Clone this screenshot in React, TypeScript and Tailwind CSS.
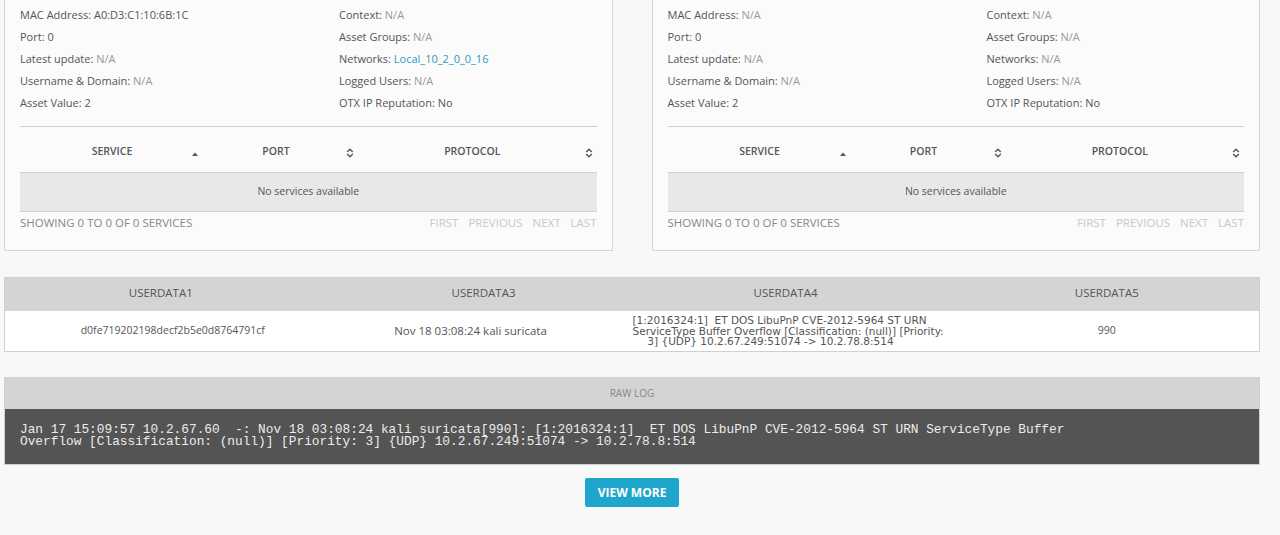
import React from "react";

const SortBoth = () => (
  <svg width="8" height="10" viewBox="0 0 8 10" className="inline-block">
    <path d="M1.2 4 L4 1.3 L6.8 4" fill="none" stroke="#555" strokeWidth="1.4" />
    <path d="M1.2 6 L4 8.7 L6.8 6" fill="none" stroke="#555" strokeWidth="1.4" />
  </svg>
);

const SortUp = () => (
  <svg width="8" height="6" viewBox="0 0 8 6" className="inline-block">
    <path d="M1 5 L4 1.5 L7 5 Z" fill="#555" />
  </svg>
);

const Field = ({
  label,
  value,
  tone = "muted",
}: {
  label: string;
  value: string;
  tone?: "muted" | "dark" | "link";
}) => (
  <div className="h-[22px] leading-[22px] text-[#555]">
    {label}:{" "}
    <span
      className={
        tone === "link"
          ? "text-[#2a9bc0]"
          : tone === "dark"
          ? "text-[#555]"
          : "text-[#999]"
      }
    >
      {value}
    </span>
  </div>
);

const AssetPanel = ({ mac, networks }: { mac: string; networks: string }) => (
  <div className="bg-[#fbfbfb] border-x border-b border-[#d6d6d6] px-[15px] pt-[4px] pb-[16px]">
    <div className="grid grid-cols-[319px_1fr] text-[11px]">
      <div>
        <Field label="MAC Address" value={mac} tone={mac === "N/A" ? "muted" : "dark"} />
        <Field label="Port" value="0" tone="dark" />
        <Field label="Latest update" value="N/A" />
        <Field label="Username & Domain" value="N/A" />
        <Field label="Asset Value" value="2" tone="dark" />
      </div>
      <div>
        <Field label="Context" value="N/A" />
        <Field label="Asset Groups" value="N/A" />
        <Field
          label="Networks"
          value={networks}
          tone={networks === "N/A" ? "muted" : "link"}
        />
        <Field label="Logged Users" value="N/A" />
        <Field label="OTX IP Reputation" value="No" tone="dark" />
      </div>
    </div>
    <div className="mt-[12px] border-t border-[#cfcfcf]" />
    <div className="flex h-[45px] pt-[5px] items-center text-[10.5px] font-semibold text-[#555] uppercase">
      <div className="relative w-[184px] text-center">
        SERVICE
        <span className="absolute right-[5px] top-[2px]">
          <SortUp />
        </span>
      </div>
      <div className="relative w-[160px] pr-[16px] text-center">
        PORT
        <span className="absolute right-[10px] top-[1px]">
          <SortBoth />
        </span>
      </div>
      <div className="relative flex-1 pr-[16px] text-center">
        PROTOCOL
        <span className="absolute right-[4px] top-[1px]">
          <SortBoth />
        </span>
      </div>
    </div>
    <div className="h-[40px] flex items-center justify-center bg-[#e8e8e8] border-y border-[#d0d0d0] text-[10.5px] text-[#555]">
      No services available
    </div>
    <div className="flex justify-between h-[22px] items-center text-[11.5px] uppercase">
      <span className="text-[#888]">Showing 0 to 0 of 0 services</span>
      <span className="flex gap-[10px] text-[#c8c8c8]">
        <span>First</span>
        <span>Previous</span>
        <span>Next</span>
        <span>Last</span>
      </span>
    </div>
  </div>
);

export default function App() {
  return (
    <div
      className="min-h-[535px] bg-[#f8f8f8] pl-[4px] pr-[20px]"
      style={{ fontFamily: '"Open Sans", "Liberation Sans", sans-serif' }}
    >
      <div className="grid grid-cols-2 gap-[39px]">
        <AssetPanel mac="A0:D3:C1:10:6B:1C" networks="Local_10_2_0_0_16" />
        <AssetPanel mac="N/A" networks="N/A" />
      </div>

      <table className="mt-[26px] w-full table-fixed border border-[#d0d0d0] text-[#555]">
        <colgroup>
          <col className="w-[320px]" />
          <col className="w-[308px]" />
          <col className="w-[310px]" />
          <col />
        </colgroup>
        <thead>
          <tr className="h-[33px] bg-[#d4d4d4] text-[11.5px] leading-[14px]">
            <th className="font-normal pb-[2px] pr-[8px]">USERDATA1</th>
            <th className="font-normal pb-[2px] pl-[10px]">USERDATA3</th>
            <th className="font-normal pb-[2px] pr-[4px]">USERDATA4</th>
            <th className="font-normal pb-[2px] pl-[12px]">USERDATA5</th>
          </tr>
        </thead>
        <tbody>
          <tr className="h-[41px] bg-white text-[10.5px] text-center">
            <td className="pl-[16px]">d0fe719202198decf2b5e0d8764791cf</td>
            <td className="pr-[16px] text-[11.5px]">Nov 18 03:08:24 kali suricata</td>
            <td
              className="text-[10.5px] leading-[10.5px] whitespace-nowrap pr-[34px]"
              style={{ fontFamily: '"DejaVu Sans", Verdana, sans-serif' }}
            >
              [1:2016324:1]&nbsp; ET DOS LibuPnP CVE-2012-5964 ST URN
              <br />
              ServiceType Buffer Overflow [Classification: (null)] [Priority:
              <br />
              3] {"{UDP}"} 10.2.67.249:51074 -&gt; 10.2.78.8:514
            </td>
            <td className="pl-[12px]">990</td>
          </tr>
        </tbody>
      </table>

      <div className="mt-[25px] border border-[#d0d0d0]">
        <div className="h-[31px] flex items-center justify-center bg-[#d4d4d4] text-[10px] text-[#888]">
          RAW LOG
        </div>
        <div
          className="bg-[#545454] text-[#ececec] text-[12.8px] leading-[12px] pl-[15px] pt-[15px] pb-[16px] whitespace-pre"
          style={{ fontFamily: '"Liberation Mono", "Courier New", monospace' }}
        >
          {"Jan 17 15:09:57 10.2.67.60  -: Nov 18 03:08:24 kali suricata[990]: [1:2016324:1]  ET DOS LibuPnP CVE-2012-5964 ST URN ServiceType Buffer\nOverflow [Classification: (null)] [Priority: 3] {UDP} 10.2.67.249:51074 -> 10.2.78.8:514"}
        </div>
      </div>

      <div className="flex justify-center mt-[13px]">
        <button className="h-[29px] w-[94px] rounded-[2px] bg-[#1ea6cc] text-white text-[12px] font-bold">
          VIEW MORE
        </button>
      </div>
    </div>
  );
}
